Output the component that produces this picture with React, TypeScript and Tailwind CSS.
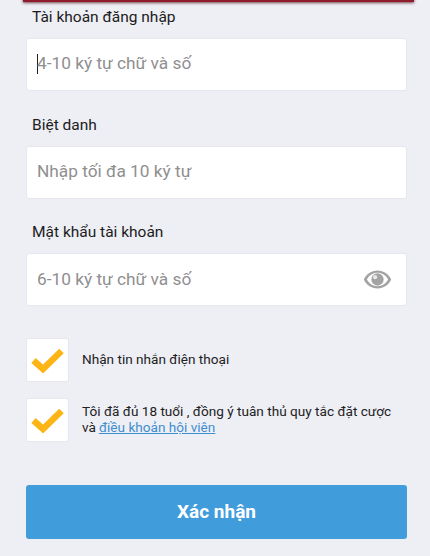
const font = { fontFamily: 'Roboto, sans-serif' };

function Check() {
  return (
    <div className="flex h-[44px] w-[43px] shrink-0 items-center justify-center rounded-[2px] border border-[#e6e6ec] bg-white">
      <svg width="33" height="26" viewBox="0 0 33 26">
        <path d="M2.5 13.5 L12 22 L30.5 4" fill="none" stroke="#fdb515" strokeWidth="6.5" />
      </svg>
    </div>
  );
}

function Field({ label, placeholder, cursor, eye }: { label: string; placeholder: string; cursor?: boolean; eye?: boolean }) {
  return (
    <div className="flex flex-col">
      <div className="h-[25px] pl-[6px] text-[15.5px] leading-[26px] text-[#1c1c1c]">{label}</div>
      <div className="mt-[9px] flex h-[53px] items-center rounded-[3px] border border-[#e6e6ec] bg-white pl-[10px] pr-[14px]">
        {cursor && <span className="mb-[2px] h-[20px] w-px shrink-0 bg-[#222]" />}
        <span className={`flex-1 text-[17.3px] text-[#8f8f8f] ${cursor ? '-ml-px' : ''} ${eye ? '' : 'mb-[2px]'}`}>{placeholder}</span>
        {eye && (
          <svg width="29" height="19" viewBox="0 0 30 20">
            <path fillRule="evenodd" fill="#a3a3a3" d="M15 0.5C8.5 0.5 3.2 4.4 0.6 10C3.2 15.6 8.5 19.5 15 19.5S26.8 15.6 29.4 10C26.8 4.4 21.5 0.5 15 0.5ZM15 3C19.6 3 23.8 5.6 26.2 10C23.8 14.4 19.6 17 15 17S6.2 14.4 3.8 10C6.2 5.6 10.4 3 15 3Z" />
            <circle cx="15" cy="10" r="6.5" fill="#a3a3a3" />
            <circle cx="12.5" cy="7.5" r="2.2" fill="#e8e8e8" />
          </svg>
        )}
      </div>
    </div>
  );
}

export default function App() {
  return (
    <div style={font} className="relative h-[556px] w-[430px] overflow-hidden bg-[#eeeef5]">
      <div className="absolute left-[23px] top-[-4px] h-[6px] w-[391px] bg-[#8f1c2c] shadow-[0_1px_3px_rgba(60,0,0,0.7)]" />
      <div className="flex flex-col pl-[26px] pr-[23px] pt-[4px]">
        <Field label="Tài khoản đăng nhập" placeholder="4-10 ký tự chữ và số" cursor />
        <div className="mt-[21px]">
          <Field label="Biệt danh" placeholder="Nhập tối đa 10 ký tự" />
        </div>
        <div className="mt-[20px]">
          <Field label="Mật khẩu tài khoản" placeholder="6-10 ký tự chữ và số" eye />
        </div>
        <div className="mt-[32px] flex items-center gap-[13px]">
          <Check />
          <span className="mb-[1px] text-[13.6px] text-[#222]">Nhận tin nhắn điện thoại</span>
        </div>
        <div className="mt-[16px] flex items-center gap-[13px]">
          <Check />
          <div className="mb-[2px] text-[13.6px] leading-[16px] text-[#222]">
            <div>Tôi đã đủ 18 tuổi , đồng ý tuân thủ quy tắc đặt cược</div>
            <div className="flex gap-[3px]">
              <span>và</span>
              <a className="text-[#3d8fd0] underline">điều khoản hội viên</a>
            </div>
          </div>
        </div>
        <button className="mt-[43px] h-[54px] w-[381px] rounded-[3px] bg-[#419cdc] text-[19px] font-bold text-white">
          Xác nhận
        </button>
      </div>
    </div>
  );
}
